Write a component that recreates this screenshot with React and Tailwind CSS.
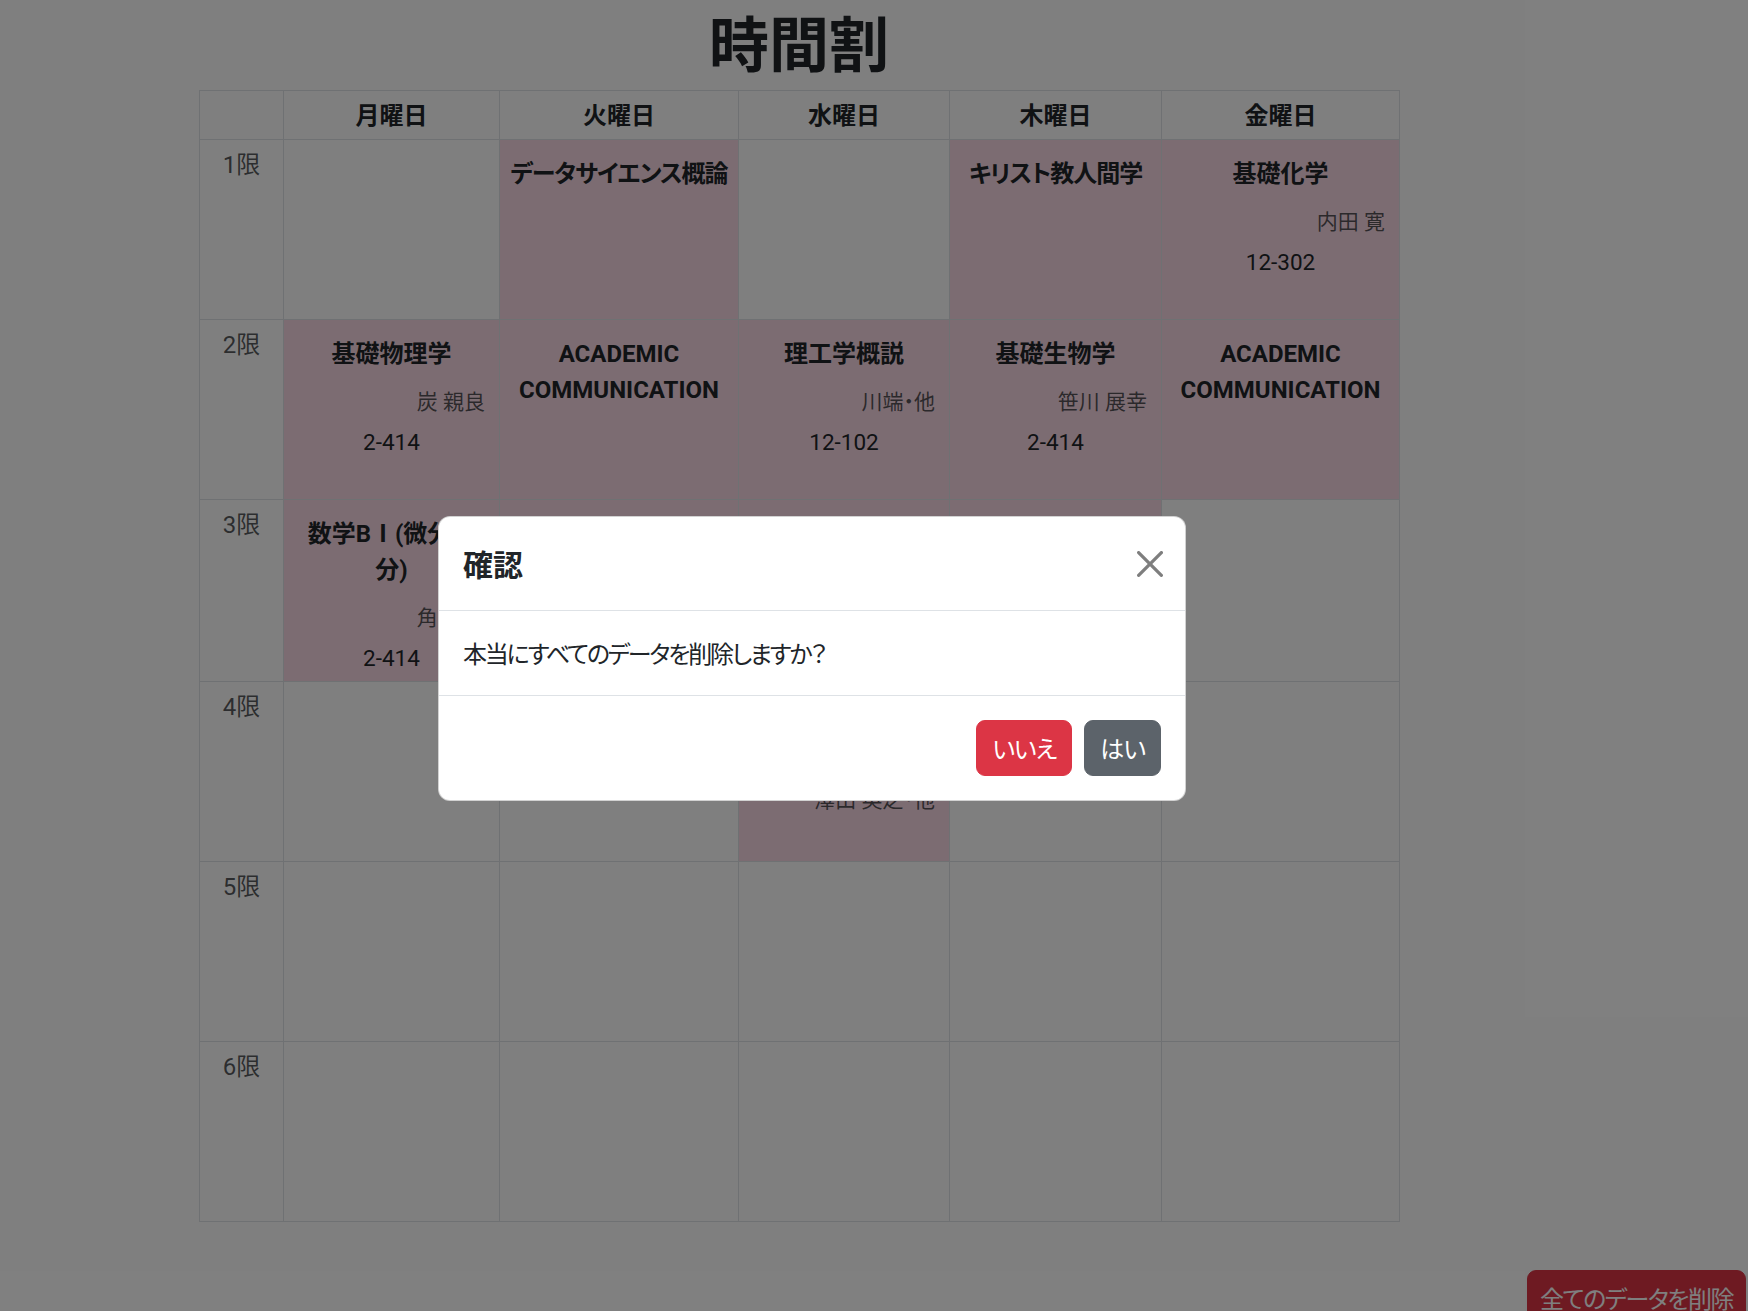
import React from 'react';

const days = ['月曜日', '火曜日', '水曜日', '木曜日', '金曜日'];

const timetable = [
  [
    null,
    { title: 'データサイエンス概論', tight: true },
    null,
    { title: 'キリスト教人間学', tight: true },
    { title: '基礎化学', teacher: '内田 寛', room: '12-302' },
  ],
  [
    { title: '基礎物理学', teacher: '炭 親良', room: '2-414' },
    { title: 'ACADEMIC\nCOMMUNICATION' },
    { title: '理工学概説', teacher: '川端・他', room: '12-102' },
    { title: '基礎生物学', teacher: '笹川 展幸', room: '2-414' },
    { title: 'ACADEMIC\nCOMMUNICATION' },
  ],
  [
    { title: '数学BⅠ(微分積\n分)', teacher: '角 和彦', room: '2-414' },
    { title: '線形代数学' },
    { title: '情報リテラシー' },
    { title: '英語' },
    null,
  ],
  [
    null,
    null,
    { title: 'コンピュータ\nプログラミング', teacher: '澤山 英之・他' },
    null,
    null,
  ],
  [null, null, null, null, null],
  [null, null, null, null, null],
];

const CourseCell = ({ course }) => {
  if (!course) {
    return <td className="border border-[#dee2e6] p-[6px] align-top" />;
  }
  return (
    <td className="border border-[#dee2e6] bg-[#f8d9e4] p-[6px] align-top">
      <div className="px-[8px] pt-[10px]">
        <div
          className={
            course.tight
              ? '-mx-[8px] whitespace-pre text-center text-[24px] font-bold leading-[36px] tracking-[-1px]'
              : '-mx-[8px] whitespace-pre text-center text-[24px] font-bold leading-[36px]'
          }
        >
          {course.title}
        </div>
        {course.teacher && (
          <div className="mt-[15px] text-right text-[21px] leading-[31.5px] text-[#212529]/75">
            {course.teacher}
          </div>
        )}
        {course.room && (
          <div className="mt-[8px] text-center text-[22.5px] leading-[31.5px]">{course.room}</div>
        )}
      </div>
    </td>
  );
};

const CloseIcon = () => (
  <svg width="26" height="26" viewBox="0 0 16 16" className="opacity-50">
    <path
      fill="#000"
      d="M.293.293a1 1 0 0 1 1.414 0L8 6.586 14.293.293a1 1 0 1 1 1.414 1.414L9.414 8l6.293 6.293a1 1 0 0 1-1.414 1.414L8 9.414l-6.293 6.293a1 1 0 0 1-1.414-1.414L6.586 8 .293 1.707a1 1 0 0 1 0-1.414"
    />
  </svg>
);

export default function App() {
  return (
    <div className="relative h-[1311px] overflow-hidden bg-white text-[#212529] [font-family:Roboto,'Noto_Sans_CJK_JP',sans-serif] [font-feature-settings:'palt']">
      <div className="ml-[199px] w-[1200px]">
        <h1 className="mb-[13px] pt-[5px] text-center text-[60px] font-bold leading-[72px] [font-family:'Noto_Sans_CJK_JP',sans-serif]">
          時間割
        </h1>
        <table className="w-[1200px] table-fixed border-collapse border border-[#dee2e6]">
          <colgroup>
            <col className="w-[84px]" />
            <col className="w-[216px]" />
            <col className="w-[239px]" />
            <col className="w-[211px]" />
            <col className="w-[212px]" />
            <col className="w-[238px]" />
          </colgroup>
          <thead>
            <tr className="h-[49px]">
              <th className="border border-[#dee2e6]" />
              {days.map((day) => (
                <th
                  key={day}
                  className="border border-[#dee2e6] px-[6px] pt-[2px] text-center align-middle text-[24px] font-bold leading-[36px]"
                >
                  {day}
                </th>
              ))}
            </tr>
          </thead>
          <tbody>
            {timetable.map((row, i) => (
              <tr key={i} className={i === 2 ? 'h-[182px]' : 'h-[180px]'}>
                <td className="border border-[#dee2e6] px-[6px] pt-[7px] text-center align-top text-[24px] leading-[36px] text-[#212529]/75">
                  {i + 1}限
                </td>
                {row.map((course, j) => (
                  <CourseCell key={j} course={course} />
                ))}
              </tr>
            ))}
          </tbody>
        </table>
      </div>

      <div className="mt-[48px] flex justify-end pr-[2px]">
        <button className="rounded-[9px] border border-[#dc3545] bg-[#dc3545] px-[12px] py-[9px] text-[24px] leading-[36px] tracking-[-1.5px] text-white [font-family:'Noto_Sans_CJK_JP',sans-serif]">
          全てのデータを削除
        </button>
      </div>

      {/* modal backdrop */}
      <div className="absolute inset-0 bg-black/50" />

      <div className="absolute left-[438px] top-[516px] w-[748px] rounded-[12px] border border-black/[0.175] bg-white [font-family:'Noto_Sans_CJK_JP',sans-serif]">
        <div className="flex items-center justify-between border-b border-[#dee2e6] p-6">
          <h5 className="text-[30px] font-bold leading-[45px]">確認</h5>
          <button className="ml-auto mr-[-2px] flex h-[26px] w-[26px] items-center justify-center">
            <CloseIcon />
          </button>
        </div>
        <div className="p-6 text-[24px] leading-[36px] tracking-[-2.2px]">本当にすべてのデータを削除しますか？</div>
        <div className="flex justify-end gap-[12px] border-t border-[#dee2e6] p-6">
          <button className="rounded-[9px] border border-[#dc3545] bg-[#dc3545] px-[15px] py-[9px] text-[24px] leading-[36px] tracking-[-1px] text-white">
            いいえ
          </button>
          <button className="rounded-[9px] border border-[#5c636a] bg-[#5c636a] px-[15px] py-[9px] text-[24px] leading-[36px] tracking-[-1px] text-white">
            はい
          </button>
        </div>
      </div>
    </div>
  );
}
